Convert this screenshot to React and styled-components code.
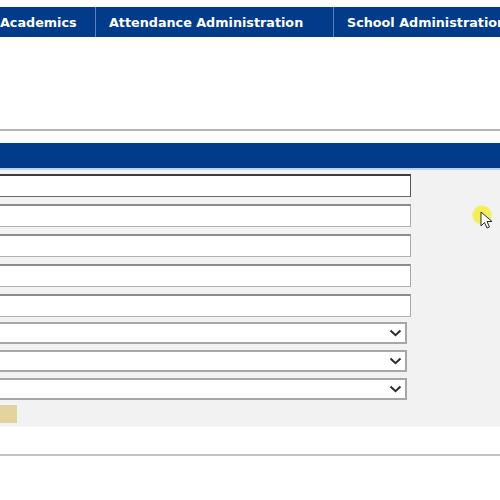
import React from "react";
import styled, { createGlobalStyle } from "styled-components";

const Global = createGlobalStyle`
  html, body { margin: 0; padding: 0; background: #ffffff; overflow: hidden; }
  body { font-family: "DejaVu Sans", Verdana, sans-serif; }
`;

const Page = styled.div`
  width: 500px;
  height: 500px;
  position: relative;
  overflow: hidden;
  background: #ffffff;
`;

const Nav = styled.nav`
  margin-top: 7px;
  height: 30px;
  background: #013b8a;
  display: flex;
  align-items: stretch;
  white-space: nowrap;
`;

const NavItem = styled.div`
  flex: 0 0 ${(p) => p.$w}px;
  padding-left: ${(p) => p.$pl}px;
  box-sizing: border-box;
  display: flex;
  align-items: center;
  color: #ffffff;
  font-weight: bold;
  font-size: 12.75px;
  border-right: ${(p) => (p.$last ? "none" : "1px solid #5b7fc1")};
`;

const Header = styled.div`
  height: 92px;
  border-bottom: 2px solid #b4b4b4;
`;

const Gap = styled.div`
  height: 12px;
  background: #fbfcfe;
`;

const TitleBar = styled.div`
  height: 25px;
  background: #013b8a;
  border-bottom: 2px solid #b9d3ea;
`;

const Panel = styled.div`
  background: #f2f2f2;
  height: 256px;
  padding-top: 4px;
  box-sizing: border-box;
  display: flex;
  flex-direction: column;
`;

const Fields = styled.div`
  margin-left: -20px;
  display: flex;
  flex-direction: column;
  gap: 7px;
`;

const TextInput = styled.div`
  width: ${(p) => p.$w}px;
  height: 23px;
  box-sizing: border-box;
  background: #ffffff;
  border: 1px solid ${(p) => (p.$focus ? "#4a4a4a" : "#9a9a9a")};
  border-top: 2px solid ${(p) => (p.$focus ? "#3c3c3c" : "#8c8c8c")};
  border-bottom-color: ${(p) => (p.$focus ? "#6a6a6a" : "#b0b0b0")};
  border-right-color: ${(p) => (p.$focus ? "#555" : "#aaa")};
`;

const Select = styled.div`
  width: 427px;
  height: 22px;
  box-sizing: border-box;
  background: #ffffff;
  border: 2px solid #a6a6a6;
  display: flex;
  align-items: center;
  justify-content: flex-end;
  padding-right: 3px;
`;

const Selects = styled.div`
  margin-left: -20px;
  margin-top: 5px;
  display: flex;
  flex-direction: column;
  gap: 6px;
`;

const Button = styled.div`
  margin-top: 5px;
  margin-left: -20px;
  width: 37px;
  height: 18px;
  background: #e2d49f;
`;

const Footer = styled.div`
  height: 27px;
  border-bottom: 2px solid #c4c4c4;
  border-top: 1px solid #f7f7f7;
`;

const Cursor = styled.div`
  position: absolute;
  left: 472px;
  top: 205px;
  width: 22px;
  height: 22px;
`;

const Halo = styled.div`
  position: absolute;
  left: 0;
  top: 0;
  width: 20px;
  height: 20px;
  border-radius: 50%;
  background: radial-gradient(circle, #f6f044 0%, #f3ee5c 55%, rgba(245,240,120,0.3) 80%, rgba(255,255,255,0) 100%);
`;

const Chevron = () => (
  <svg width="13" height="8" viewBox="0 0 13 8">
    <path d="M1.5 1.5 L6.5 6.2 L11.5 1.5" fill="none" stroke="#2b2b2b" strokeWidth="2" />
  </svg>
);

const Arrow = () => (
  <svg width="14" height="20" viewBox="0 0 14 20" style={{ position: "absolute", left: 8, top: 6 }}>
    <path d="M1 1 L1 15 L4.5 11.5 L7 17 L9.5 16 L7 10.5 L12 10.5 Z" fill="#ffffff" stroke="#2a2a2a" strokeWidth="1" strokeLinejoin="round" />
  </svg>
);

export default function App() {
  return (
    <Page>
      <Global />
      <Nav>
        <NavItem $w={96} $pl={0}>Academics</NavItem>
        <NavItem $w={238} $pl={13}>Attendance Administration</NavItem>
        <NavItem $w={200} $pl={13} $last>School Administration</NavItem>
      </Nav>
      <Header />
      <Gap />
      <TitleBar />
      <Panel>
        <Fields>
          <TextInput $w={431} $focus />
          <TextInput $w={431} />
          <TextInput $w={431} />
          <TextInput $w={431} />
          <TextInput $w={431} />
        </Fields>
        <Selects>
          <Select><Chevron /></Select>
          <Select><Chevron /></Select>
          <Select><Chevron /></Select>
        </Selects>
        <Button />
      </Panel>
      <Footer />
      <Cursor>
        <Halo />
        <Arrow />
      </Cursor>
    </Page>
  );
}
